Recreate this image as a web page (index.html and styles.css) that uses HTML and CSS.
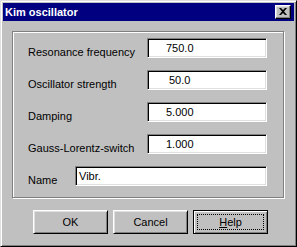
FILE: index.html
```html
<!DOCTYPE html>
<html>
<head>
<meta charset="utf-8">
<link rel="stylesheet" href="styles.css">
</head>
<body>
<div class="window">
  <div class="titlebar">
    <span class="title">Kim oscillator</span>
    <div class="close">
      <svg width="8" height="7" viewBox="0 0 8 7"><path d="M0 0h2l2 2 2-2h2L5 3.5 8 7H6L4 5 2 7H0l3-3.5z" fill="#000"/></svg>
    </div>
  </div>
  <div class="group">
    <div class="row"><span class="label">Resonance frequency</span><div class="field num">750.0</div></div>
    <div class="row"><span class="label">Oscillator strength</span><div class="field num shifted">50.0</div></div>
    <div class="row"><span class="label">Damping</span><div class="field num">5.000</div></div>
    <div class="row"><span class="label">Gauss-Lorentz-switch</span><div class="field num">1.000</div></div>
    <div class="row"><span class="label short">Name</span><div class="field text">Vibr.</div></div>
  </div>
  <div class="buttons">
    <div class="btn">OK</div>
    <div class="btn">Cancel</div>
    <div class="btn default"><span class="focus"><u>H</u>elp</span></div>
  </div>
</div>
</body>
</html>
```
FILE: styles.css
```css
* { box-sizing: border-box; }
html, body { margin: 0; padding: 0; background: #c0c0c0; }
body {
  font-family: "Liberation Sans", Arial, sans-serif;
  font-size: 11px;
  color: #000;
}
.window {
  width: 297px;
  height: 247px;
  background: #c0c0c0;
  border: 1px solid;
  border-color: #dfdfdf #000 #000 #dfdfdf;
  box-shadow: inset 1px 1px #fff, inset -1px -1px #808080;
  padding: 2px;
  display: flex;
  flex-direction: column;
}
.titlebar {
  height: 18px;
  background: #000080;
  display: flex;
  align-items: center;
  justify-content: space-between;
  padding-left: 2px;
}
.title {
  color: #fff;
  font-weight: bold;
  font-size: 11px;
  line-height: 13px;
}
.close {
  width: 16px;
  height: 14px;
  margin-right: 3px;
  background: #c0c0c0;
  border: 1px solid;
  border-color: #fff #000 #000 #fff;
  box-shadow: inset -1px -1px #808080, inset 1px 1px #dfdfdf;
  display: flex;
  align-items: center;
  justify-content: center;
  padding-bottom: 1px;
}
.close svg { display: block; }
.group {
  margin: 10px 0 0 9px;
  width: 272px;
  border: 1px solid #808080;
  box-shadow: inset 1px 1px #fff, 1px 1px #fff;
  padding: 6px 16px 11px 15px;
  display: flex;
  flex-direction: column;
  gap: 12px;
}
.row {
  display: flex;
  height: 20px;
}
.label {
  flex: 1;
  line-height: 20px;
  padding-top: 4px;
  white-space: nowrap;
}
.label.short { flex: 0 0 47px; }
.field {
  height: 20px;
  background: #fff;
  border: 1px solid;
  border-color: #808080 #fff #fff #808080;
  box-shadow: inset 1px 1px #000, inset -1px -1px #dfdfdf;
  line-height: 18px;
  white-space: nowrap;
}
.field.num { width: 120px; padding-left: 18px; }
.field.num.shifted { padding-left: 21px; }
.field.text { flex: 1; padding-left: 3px; }
.buttons {
  display: flex;
  gap: 5px;
  margin: 12px 0 0 30px;
}
.btn {
  width: 75px;
  height: 24px;
  border: 1px solid;
  border-color: #fff #000 #000 #fff;
  box-shadow: inset 1px 1px #dfdfdf, inset -1px -1px #808080;
  display: flex;
  align-items: center;
  justify-content: center;
  line-height: 13px;
}
.btn.default {
  border-color: #000;
  box-shadow: inset 1px 1px #fff, inset -1px -1px #808080;
  padding: 3px;
}
.focus {
  flex: 1;
  align-self: stretch;
  border: 1px dotted #000;
  display: flex;
  align-items: center;
  justify-content: center;
}
```
